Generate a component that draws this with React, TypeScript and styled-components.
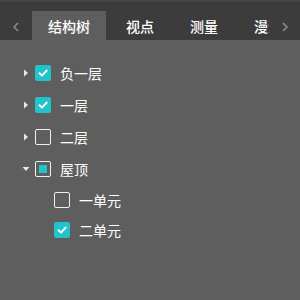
import React from "react";
import styled, { createGlobalStyle } from "styled-components";

const GlobalStyle = createGlobalStyle`
  html, body { margin: 0; padding: 0; }
  body {
    width: 300px;
    height: 300px;
    overflow: hidden;
    background: #5e5e5e;
    font-family: "Noto Sans CJK SC", "Noto Sans", sans-serif;
  }
`;

type CheckState = "checked" | "unchecked" | "partial";

interface Node {
  label: string;
  state: CheckState;
  expand?: "open" | "closed";
  level: number;
}

const nodes: Node[] = [
  { label: "负一层", state: "checked", expand: "closed", level: 0 },
  { label: "一层", state: "checked", expand: "closed", level: 0 },
  { label: "二层", state: "unchecked", expand: "closed", level: 0 },
  { label: "屋顶", state: "partial", expand: "open", level: 0 },
  { label: "一单元", state: "unchecked", level: 1 },
  { label: "二单元", state: "checked", level: 1 },
];

const tabs = ["结构树", "视点", "测量", "漫游"];

function App() {
  return (
    <Panel>
      <GlobalStyle />
      <TabBar>
        <Arrow $w={32}>
          <svg width="8" height="10" viewBox="0 0 8 10">
            <path d="M6 1 L2 5 L6 9" fill="none" stroke="#8a8a8a" strokeWidth="1.6" />
          </svg>
        </Arrow>
        <TabStrip>
          {tabs.map((t, i) => (
            <Tab key={t} $active={i === 0}>{t}</Tab>
          ))}
        </TabStrip>
        <Arrow $w={31}>
          <svg width="8" height="10" viewBox="0 0 8 10">
            <path d="M2 1 L6 5 L2 9" fill="none" stroke="#8a8a8a" strokeWidth="1.6" />
          </svg>
        </Arrow>
      </TabBar>
      <Tree>
        {nodes.map((n) => (
          <Row key={n.label} $level={n.level}>
            <Toggle>
              {n.expand === "closed" && (
                <svg width="6" height="8" viewBox="0 0 6 8">
                  <path d="M1 0.5 L5 4 L1 7.5 Z" fill="#e8e8e8" />
                </svg>
              )}
              {n.expand === "open" && (
                <svg width="8" height="6" viewBox="0 0 8 6">
                  <path d="M0.5 1 L7.5 1 L4 5 Z" fill="#e8e8e8" />
                </svg>
              )}
            </Toggle>
            <Box $state={n.state}>
              {n.state === "checked" && (
                <svg width="12" height="12" viewBox="0 0 12 12">
                  <path d="M2.5 6.2 L5 8.6 L9.6 3.6" fill="none" stroke="#ffffff" strokeWidth="2" strokeLinecap="round" strokeLinejoin="round" />
                </svg>
              )}
              {n.state === "partial" && <Inner />}
            </Box>
            <Label>{n.label}</Label>
          </Row>
        ))}
      </Tree>
    </Panel>
  );
}

const Panel = styled.div`
  width: 300px;
  height: 300px;
  background: #5e5e5e;
  display: flex;
  flex-direction: column;
`;

const TabBar = styled.div`
  height: 40px;
  display: flex;
  align-items: stretch;
  background: #3c3c3c;
  border-top: 2px solid #464646;
  box-sizing: border-box;
`;

const Arrow = styled.div<{ $w: number }>`
  width: ${(p) => p.$w}px;
  flex: none;
  display: flex;
  align-items: center;
  justify-content: center;
  padding-top: 12px;
  box-sizing: border-box;
`;

const TabStrip = styled.div`
  flex: 1;
  display: flex;
  align-items: flex-end;
  gap: 4px;
  overflow: hidden;
  white-space: nowrap;
`;

const Tab = styled.div<{ $active: boolean }>`
  flex: none;
  height: 29px;
  padding: 0 16px;
  display: flex;
  align-items: center;
  font-size: 14px;
  font-weight: 500;
  color: #ffffff;
  background: ${(p) => (p.$active ? "#5e5e5e" : "transparent")};
`;

const Tree = styled.div`
  padding-top: 17px;
  display: flex;
  flex-direction: column;
`;

const Row = styled.div<{ $level: number }>`
  height: ${(p) => (p.$level === 0 ? 32 : 30)}px;
  display: flex;
  align-items: center;
  padding-left: ${(p) => 16 + p.$level * 19}px;
`;

const Toggle = styled.div`
  width: 19px;
  display: flex;
  align-items: center;
  justify-content: center;
`;

const Box = styled.div<{ $state: CheckState }>`
  width: 16px;
  height: 16px;
  box-sizing: border-box;
  border-radius: 2px;
  display: flex;
  align-items: center;
  justify-content: center;
  background: ${(p) => (p.$state === "checked" ? "#22c3cb" : "transparent")};
  border: 1px solid ${(p) => (p.$state === "checked" ? "#22c3cb" : "#f0f0f0")};
`;

const Inner = styled.div`
  width: 8px;
  height: 8px;
  background: #22c3cb;
`;

const Label = styled.span`
  margin-left: 9px;
  font-size: 14px;
  color: #ffffff;
`;

export default App;
